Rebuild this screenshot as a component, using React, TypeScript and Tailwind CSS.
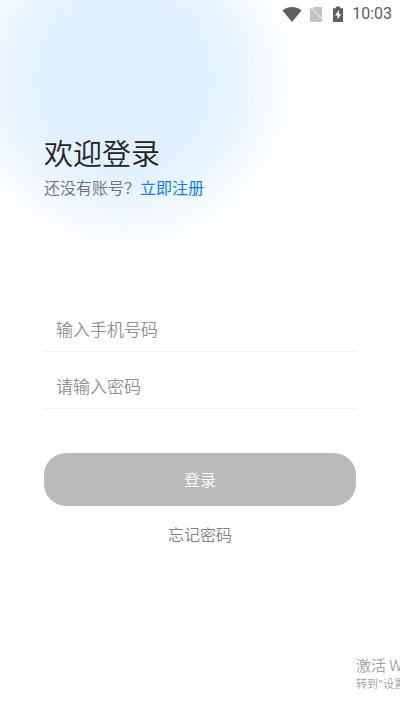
function StatusBar() {
  return (
    <header className="flex h-7 items-center justify-end pr-2 text-[#5f5f5f]">
      <svg className="h-4 w-5" viewBox="0 0 20 16" fill="currentColor" aria-label="Wi-Fi">
        <path d="M0.5 4.500C3 2.200 6.300 1 10 1s7 1.200 9.500 3.500L10 16z" />
      </svg>
      <svg className="ml-1.5 h-4 w-4" viewBox="0 0 16 16" aria-label="No SIM">
        <path d="M5.500 1.500L6 1H13a1 1 0 0 1 1 1V12.500L4 2.500zM1.200 2.200L2 1.400L15 14.600L14.200 15.400L13.500 14.700V16H3a1 1 0 0 1-1-1V3z" fill="#c4c4c4" />
      </svg>
      <svg className="ml-2 h-4 w-3" viewBox="0 0 12 16" aria-label="Charging">
        <path d="M1 2.300h2.800V0.500h4.400v1.800H11V16H1z" fill="currentColor" />
        <path d="M7 4L3 9.600h2.500V13.500L9.200 7.900H7z" fill="#fff" />
      </svg>
      <time className="ml-2 font-['Roboto',sans-serif] text-base leading-7 font-normal">10:03</time>
    </header>
  );
}

const fieldClass =
  "block h-[57px] w-full border-b border-[#f2f2f2] bg-transparent px-3 pt-2.5 text-[17px] text-[#333] outline-none placeholder:text-[#909090]";

export default function App() {
  return (
    <div className="relative min-h-screen overflow-hidden bg-white font-['Noto_Sans_CJK_SC',sans-serif] font-[350]">
      <div className="absolute -top-13 -left-2 size-66 rounded-full bg-[#e0f0ff] blur-[30px]" />
      <div className="relative">
        <StatusBar />
        <main className="px-11 pt-[103px]">
          <h1 className="text-[29px] leading-[42px] text-[#222]">欢迎登录</h1>
          <p className="mt-0.5 text-base leading-6 text-[#707070]">
            还没有账号？<a href="#register" className="font-normal text-[#0a7cff]">立即注册</a>
          </p>
          <form className="mt-24" onSubmit={(e) => e.preventDefault()}>
            <input type="tel" aria-label="手机号码" placeholder="输入手机号码" className={fieldClass} />
            <input type="password" aria-label="密码" placeholder="请输入密码" className={fieldClass} />
            <button type="submit" className="mt-11 h-[53px] w-full rounded-[22px] bg-[#bababa] pb-0.5 text-base text-white">
              登录
            </button>
          </form>
          <p className="mt-4 text-center text-base leading-6 text-[#808080]">
            <a href="#forgot">忘记密码</a>
          </p>
        </main>
      </div>
      <aside className="absolute right-0 bottom-5 w-11 overflow-hidden whitespace-nowrap text-[#a0a0a0]">
        <p className="text-[15px] leading-5">激活 W</p>
        <p className="text-[11px] leading-4">转到"设置</p>
      </aside>
    </div>
  );
}
